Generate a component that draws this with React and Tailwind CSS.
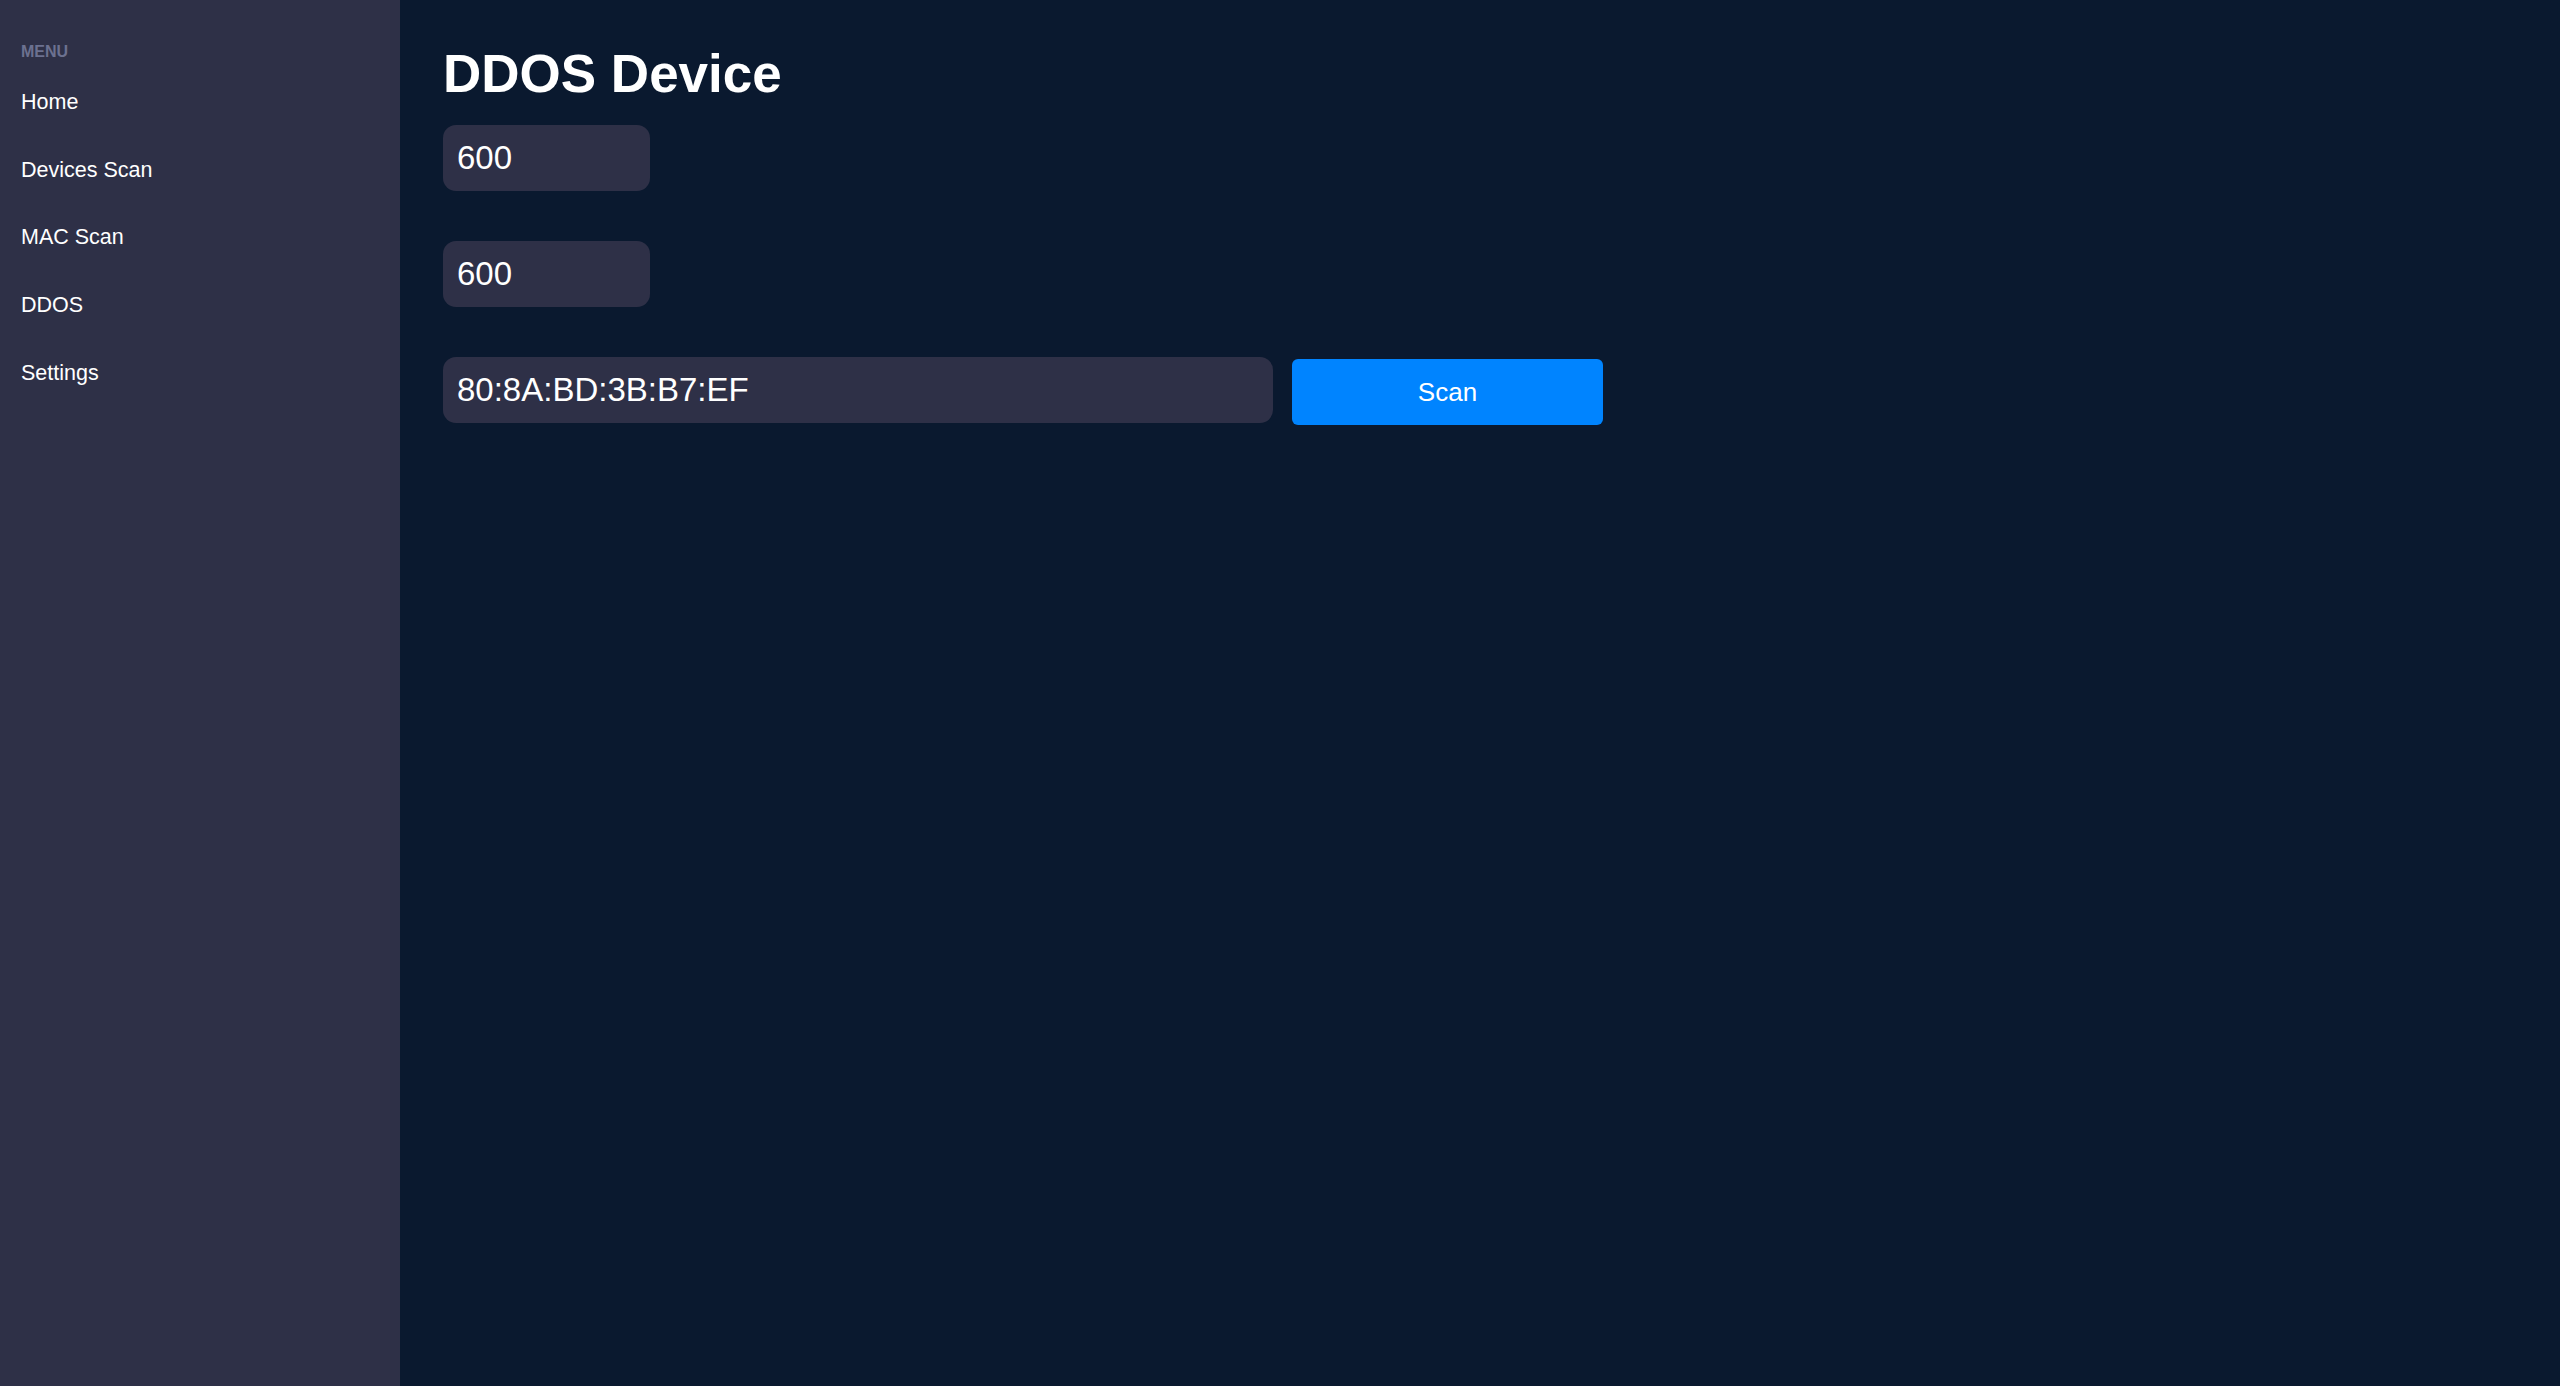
import React from 'react';

const menuItems = ['Home', 'Devices Scan', 'MAC Scan', 'DDOS', 'Settings'];

const Sidebar = () => {
  return (
    <aside className="w-[400px] shrink-0 bg-[#2e3047] pt-[43px] px-[21px]">
      <div className="text-[16px] leading-[18px] font-bold text-[#6c7190] uppercase">Menu</div>
      <nav className="mt-[8px] flex flex-col">
        {menuItems.map((item) => (
          <a key={item} href="#" className="block py-[22px] text-[21.5px] leading-[23.7px] text-white">
            {item}
          </a>
        ))}
      </nav>
    </aside>
  );
};

const Field = ({ value, className = '' }) => (
  <input
    type="text"
    defaultValue={value}
    className={`h-[66px] rounded-[13px] bg-[#2e3047] px-[14px] text-[33px] text-white outline-none ${className}`}
  />
);

export default function App() {
  return (
    <div className="flex min-h-[1386px] font-['Liberation_Sans',Arial,sans-serif]">
      <Sidebar />

      <main className="flex-1 bg-[#0a192f] pl-[43px] pt-[44px]">
        <h1 className="text-[53px] leading-[60px] font-bold text-white">DDOS Device</h1>

        <div className="mt-[21px] flex flex-col gap-[50px]">
          <Field value="600" className="w-[207px]" />
          <Field value="600" className="w-[207px]" />

          {/* MAC row */}
          <div className="flex items-start gap-[19px]">
            <Field value="80:8A:BD:3B:B7:EF" className="w-[830px]" />
            <button className="mt-[2px] h-[66px] w-[311px] rounded-[6px] bg-[#0084ff] text-[26px] text-white">
              Scan
            </button>
          </div>
        </div>
      </main>
    </div>
  );
}
